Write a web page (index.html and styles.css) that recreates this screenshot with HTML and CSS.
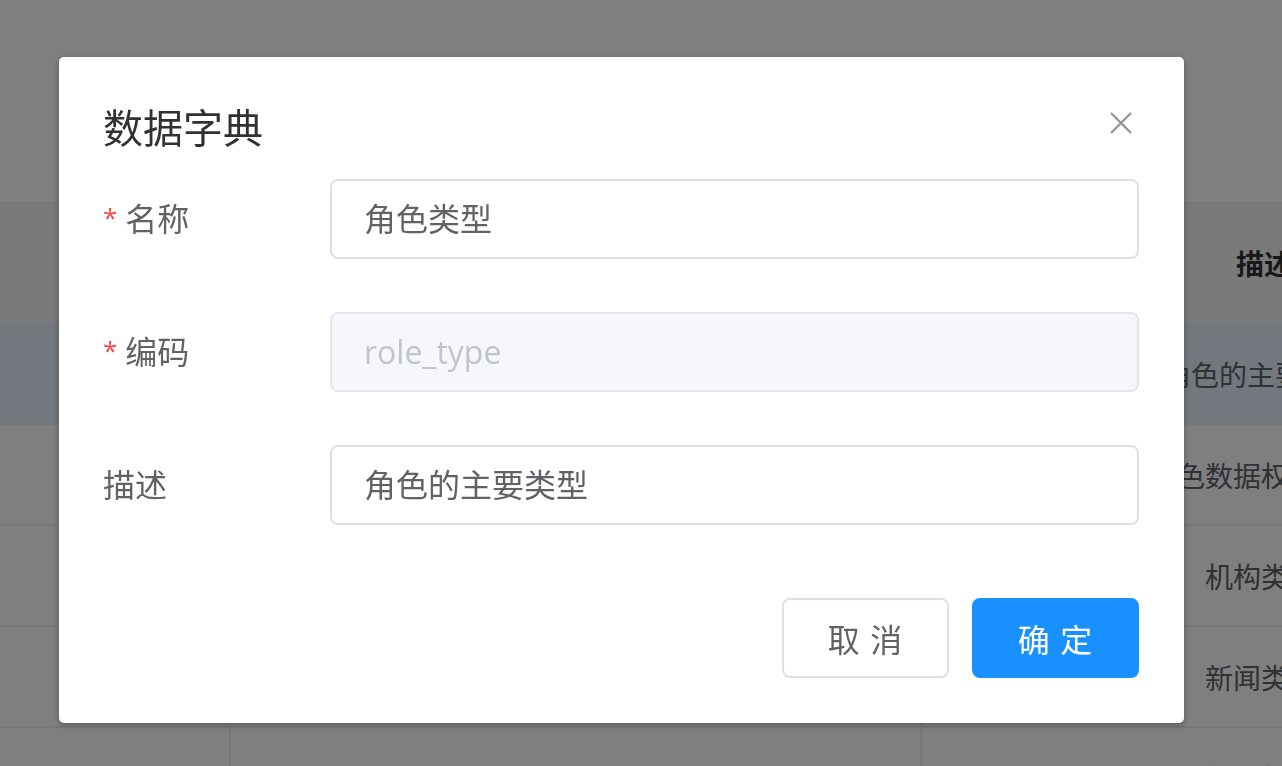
FILE: index.html
```html
<!DOCTYPE html>
<html lang="zh-CN">
<head>
<meta charset="utf-8">
<title>数据字典</title>
<link rel="stylesheet" href="styles.css">
</head>
<body>
<div class="page">
  <div class="table">
    <div class="row head">
      <div class="cell c1">序号</div>
      <div class="cell c2">编码</div>
      <div class="cell c3">描述</div>
    </div>
    <div class="row current">
      <div class="cell c1">1</div>
      <div class="cell c2">role_type</div>
      <div class="cell c3">角色的主要类型</div>
    </div>
    <div class="row">
      <div class="cell c1">2</div>
      <div class="cell c2">role_data_scope</div>
      <div class="cell c3">角色数据权限范围</div>
    </div>
    <div class="row">
      <div class="cell c1">3</div>
      <div class="cell c2">org_type</div>
      <div class="cell c3">机构类型</div>
    </div>
    <div class="row">
      <div class="cell c1">4</div>
      <div class="cell c2">news_type</div>
      <div class="cell c3">新闻类型</div>
    </div>
    <div class="row">
      <div class="cell c1">5</div>
      <div class="cell c2">news_label</div>
      <div class="cell c3">新闻标签</div>
    </div>
  </div>
</div>

<div class="mask">
  <div class="dialog">
    <div class="dialog-header">
      <span class="dialog-title">数据字典</span>
      <button class="close" type="button" aria-label="关闭">
        <svg width="22" height="22" viewBox="0 0 22 22"><path d="M1 1 L21 21 M21 1 L1 21" stroke="#909399" stroke-width="2.2" fill="none"/></svg>
      </button>
    </div>
    <div class="form">
      <div class="form-item">
        <div class="label"><span class="star">*</span>名称</div>
        <div class="input">角色类型</div>
      </div>
      <div class="form-item">
        <div class="label"><span class="star">*</span>编码</div>
        <div class="input disabled">role_type</div>
      </div>
      <div class="form-item">
        <div class="label">描述</div>
        <div class="input">角色的主要类型</div>
      </div>
    </div>
    <div class="footer">
      <button class="btn" type="button">取 消</button>
      <button class="btn primary" type="button">确 定</button>
    </div>
  </div>
</div>
</body>
</html>
```

FILE: styles.css
```css
html, body {
  margin: 0;
  padding: 0;
  width: 1282px;
  height: 766px;
  overflow: hidden;
  background: #fff;
  font-family: "Open Sans", "Noto Sans CJK SC", sans-serif;
}

.page {
  padding-top: 202px;
}

.table {
  width: 1600px;
  border-top: 2px solid #ebeef5;
}

.row {
  display: flex;
  height: 99px;
  border-bottom: 2px solid #ebeef5;
}

.row.head {
  height: 118px;
  background: #f4f4f4;
}

.row.current {
  background: #e6f0ff;
}

.cell {
  display: flex;
  align-items: center;
  justify-content: center;
  font-size: 28px;
  color: #606266;
  box-sizing: border-box;
}

.head .cell {
  font-weight: bold;
  color: #303133;
}

.head .c3 {
  padding-left: 6px;
}

.c1 {
  width: 231px;
  border-right: 2px solid #ebeef5;
}

.c2 {
  width: 691px;
  border-right: 2px solid #ebeef5;
}

.c3 {
  flex: 1;
}

.mask {
  position: fixed;
  inset: 0;
  background: rgba(0, 0, 0, 0.5);
  padding: 57px 0 0 59px;
}

.dialog {
  width: 1125px;
  box-sizing: border-box;
  background: #fff;
  border-radius: 5px;
  box-shadow: 0 2px 6px rgba(0, 0, 0, 0.3);
  padding: 47px 45px 45px 44px;
}

.dialog-header {
  display: flex;
  align-items: flex-start;
  justify-content: space-between;
}

.dialog-title {
  font-size: 40px;
  line-height: 48px;
  color: #303133;
}

.close {
  width: 36px;
  height: 36px;
  margin-top: 1px;
  padding: 0;
  border: 0;
  background: transparent;
  display: flex;
  align-items: center;
  justify-content: center;
}

.form {
  margin-top: 27px;
  display: flex;
  flex-direction: column;
  gap: 53px;
}

.form-item {
  display: flex;
  align-items: center;
}

.label {
  width: 227px;
  flex: none;
  font-size: 32px;
  line-height: 80px;
  color: #606266;
}

.star {
  color: #f5484a;
  font-size: 26px;
  margin-right: 8px;
  vertical-align: top;
  position: relative;
  top: -2px;
}

.input {
  flex: 1;
  height: 80px;
  box-sizing: border-box;
  border: 2px solid #dcdfe6;
  border-radius: 8px;
  padding: 0 32px;
  font-size: 32px;
  line-height: 76px;
  color: #606266;
}

.input.disabled {
  background: #f5f7fa;
  border-color: #e4e7ed;
  color: #c0c4cc;
}

.footer {
  margin-top: 73px;
  display: flex;
  justify-content: flex-end;
  gap: 23px;
}

.btn {
  width: 167px;
  height: 80px;
  box-sizing: border-box;
  border: 2px solid #dcdfe6;
  border-radius: 8px;
  background: #fff;
  color: #606266;
  font-family: "Open Sans", "Noto Sans CJK SC", sans-serif;
  font-size: 32px;
  letter-spacing: 1px;
  padding: 0;
}

.btn.primary {
  background: #1890ff;
  border-color: #1890ff;
  color: #fff;
}
```
